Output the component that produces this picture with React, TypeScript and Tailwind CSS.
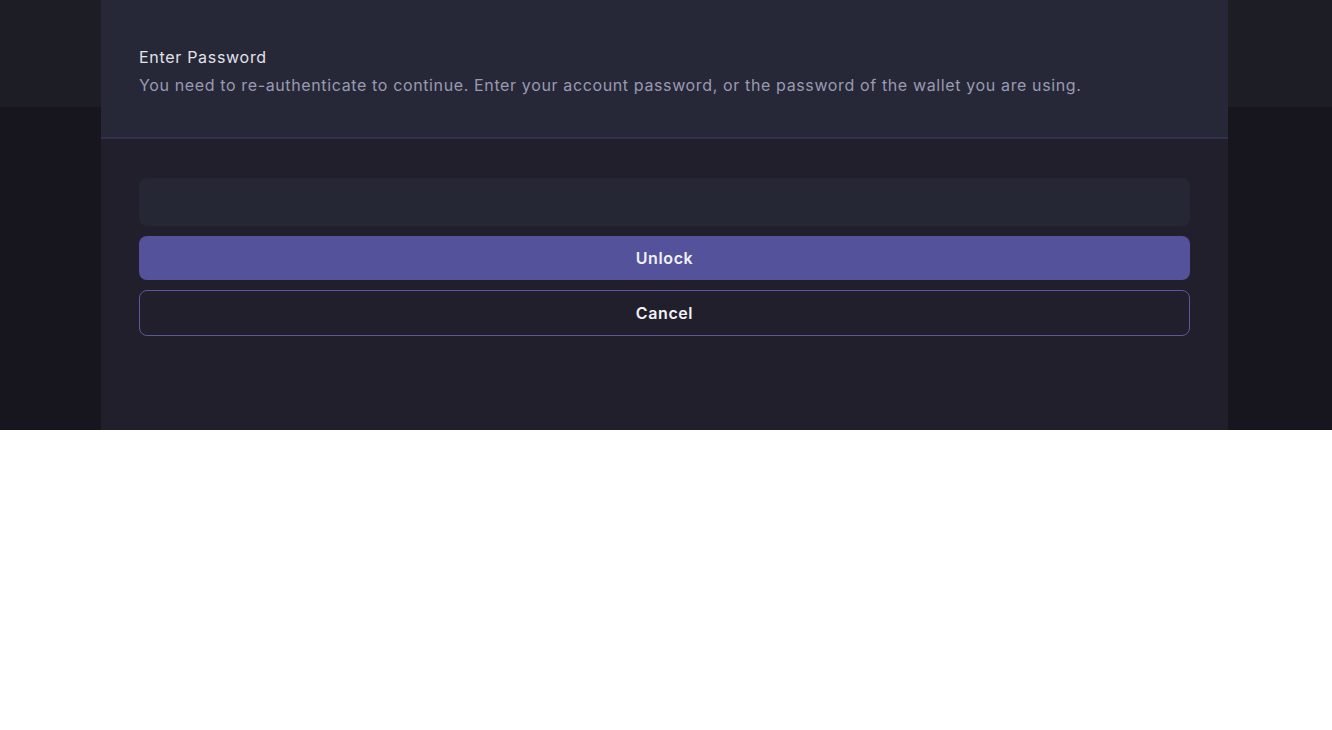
import React from "react";

export default function App() {
  return (
    <div className="w-[1332px] h-[730px] bg-white" style={{ fontFamily: "Inter, 'Open Sans', sans-serif" }}>
      <div className="relative h-[430px] overflow-hidden flex flex-col">
        <div className="h-[107px] bg-[#1c1d25]" />
        <div className="flex-1 bg-[#17161f]" />
        <div className="absolute left-[101px] top-0 w-[1127px] h-[430px] flex flex-col bg-[#201f2b]">
          <div className="h-[139px] bg-[#262837] border-b-[2px] border-[#30324a] px-[38px] pt-[45px]">
            <div className="text-[16px] leading-6 text-[#e2e2ea] tracking-[0.7px]">Enter Password</div>
            <div className="text-[16px] leading-6 mt-[4px] text-[#9a9ab2] tracking-[0.63px]">
              You need to re-authenticate to continue. Enter your account password, or the password of the wallet you are using.
            </div>
          </div>
          <div className="px-[38px] pt-[39px] flex flex-col gap-[10px]">
            <input
              type="password"
              className="h-[48px] w-full rounded-lg bg-[#252735] outline-none px-4 text-white"
            />
            <button className="h-[44px] w-full rounded-lg bg-[#53529a] text-[#f0f0f6] text-[16px] font-semibold tracking-[0.6px]">
              Unlock
            </button>
            <button className="h-[46px] w-full rounded-lg border border-[#5a57a0] bg-transparent text-[#f0f0f6] text-[16px] font-semibold tracking-[0.6px]">
              Cancel
            </button>
          </div>
        </div>
      </div>
    </div>
  );
}
